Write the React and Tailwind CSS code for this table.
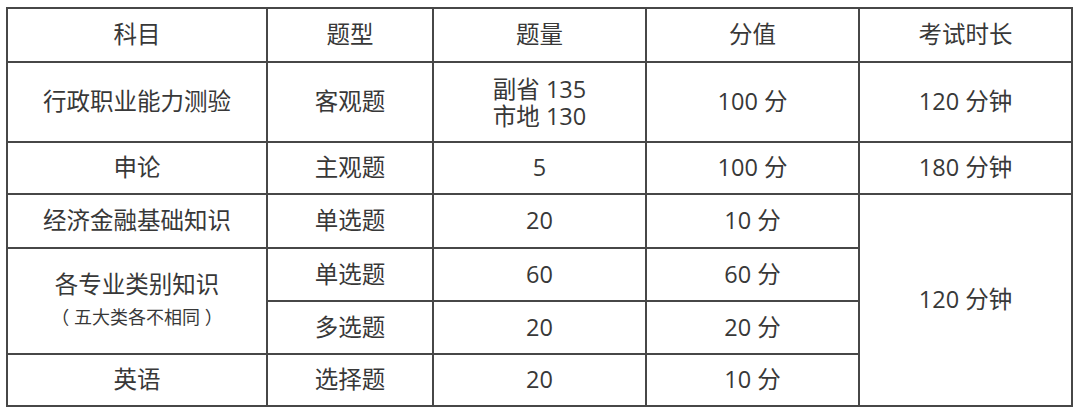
import React from "react";

const cell = "bg-white flex items-center justify-center text-center";

export default function App() {
  return (
    <div className="w-[1080px] h-[415px] bg-white pt-[7px] pl-[6px]" style={{ fontFamily: '"Open Sans", "Noto Sans CJK SC", sans-serif' }}>
      <div className="grid w-max bg-[#474747] p-[2px] gap-[2px] grid-cols-[258px_164px_211px_211px_211px] grid-rows-[52px_78px_50px_52px_51px_51px_50px] text-[23.5px] text-[#383838] leading-none">
        <div className={cell}>科目</div>
        <div className={cell}>题型</div>
        <div className={cell}>题量</div>
        <div className={cell}>分值</div>
        <div className={cell}>考试时长</div>

        <div className={cell}>行政职业能力测验</div>
        <div className={cell}>客观题</div>
        <div className={`${cell} flex-col`}>
          <span className="leading-[28px]">副省 135</span>
          <span className="leading-[27px]">市地 130</span>
        </div>
        <div className={cell}>100 分</div>
        <div className={cell}>120 分钟</div>

        <div className={cell}>申论</div>
        <div className={cell}>主观题</div>
        <div className={cell}>5</div>
        <div className={cell}>100 分</div>
        <div className={cell}>180 分钟</div>

        <div className={cell}>经济金融基础知识</div>
        <div className={cell}>单选题</div>
        <div className={cell}>20</div>
        <div className={cell}>10 分</div>
        <div className={`${cell} row-span-4`}>120 分钟</div>

        <div className={`${cell} row-span-2 flex-col`}>
          <span className="leading-[33px]">各专业类别知识</span>
          <span className="text-[18px] leading-[33px]">（ 五大类各不相同 ）</span>
        </div>
        <div className={cell}>单选题</div>
        <div className={cell}>60</div>
        <div className={cell}>60 分</div>

        <div className={cell}>多选题</div>
        <div className={cell}>20</div>
        <div className={cell}>20 分</div>

        <div className={cell}>英语</div>
        <div className={cell}>选择题</div>
        <div className={cell}>20</div>
        <div className={cell}>10 分</div>
      </div>
    </div>
  );
}
